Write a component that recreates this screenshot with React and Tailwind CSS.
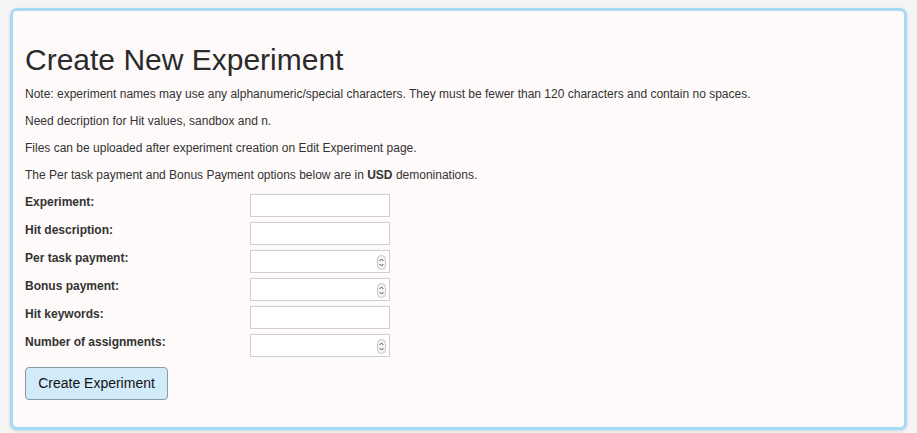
import React from "react";

function Spinner() {
  return (
    <svg
      className="absolute right-[3px] top-[4px]"
      width="9"
      height="15"
      viewBox="0 0 9 15"
    >
      <rect x="0.5" y="0.5" width="8" height="14" rx="4" fill="#f4f4f4" stroke="#c4c4c4" />
      <path d="M2.6 6 L4.5 4 L6.4 6" fill="none" stroke="#555" strokeWidth="1" />
      <path d="M2.6 9 L4.5 11 L6.4 9" fill="none" stroke="#555" strokeWidth="1" />
    </svg>
  );
}

function Row({ label, number }) {
  return (
    <div className="flex items-start h-[28px]">
      <label className="w-[225px] font-bold text-[12px] leading-[17px] text-[#333]">{label}</label>
      <div className="relative w-[140px] h-[23px] bg-white border border-[#cfcfcf]">
        <input type="text" className="w-full h-full outline-none bg-transparent px-1 text-[12px]" />
        {number && <Spinner />}
      </div>
    </div>
  );
}

export default function App() {
  return (
    <div
      className="w-[917px] h-[433px] bg-[#f4f4f4] pt-[8px] px-[10px]"
      style={{ fontFamily: '"Liberation Sans", Arial, sans-serif' }}
    >
      <div className="h-[422px] bg-[#fdfaf9] border-[3px] border-[#a6dbf6] rounded-[7px] shadow-[0_1px_3px_rgba(0,0,0,0.15)] pt-[32px] pl-[12px] text-[#333]">
        <h1 className="text-[30px] leading-[33px] mb-[10px] text-[#2b2b2b]">Create New Experiment</h1>
        <p className="text-[12px] leading-[17px] mb-[10px]">
          Note: experiment names may use any alphanumeric/special characters. They must be fewer than 120 characters and contain no spaces.
        </p>
        <p className="text-[12px] leading-[17px] mb-[10px]">Need decription for Hit values, sandbox and n.</p>
        <p className="text-[12px] leading-[17px] mb-[10px]">Files can be uploaded after experiment creation on Edit Experiment page.</p>
        <p className="text-[12px] leading-[17px] mb-[10px]">
          The Per task payment and Bonus Payment options below are in <b>USD</b> demoninations.
        </p>
        <div className="flex flex-col">
          <Row label="Experiment:" />
          <Row label="Hit description:" />
          <Row label="Per task payment:" number />
          <Row label="Bonus payment:" number />
          <Row label="Hit keywords:" />
          <Row label="Number of assignments:" number />
        </div>
        <button className="mt-[5px] w-[143px] h-[33px] bg-[#d1ebfb] border border-[#8b99a4] rounded-[4px] text-[14px] text-[#111]">
          Create Experiment
        </button>
      </div>
    </div>
  );
}
